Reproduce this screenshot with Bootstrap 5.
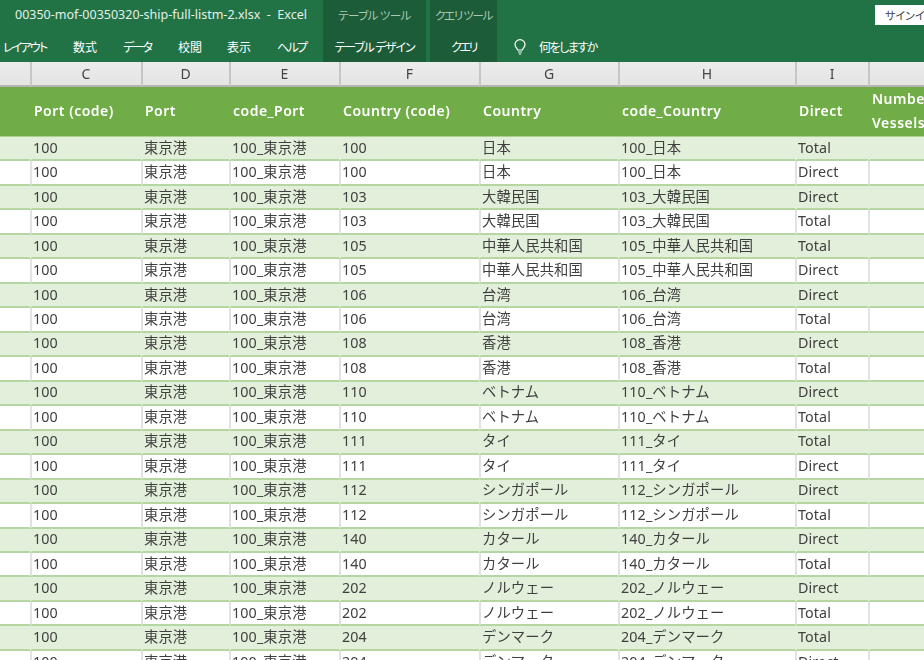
<!doctype html>
<html lang="ja"><head><meta charset="utf-8"><title>Excel</title>
<link rel="stylesheet" href="https://cdn.jsdelivr.net/npm/bootstrap@5.3.0/dist/css/bootstrap.min.css">
<style>
html,body{height:660px;overflow:hidden;background:#fff}
body{font-family:"Noto Sans","Noto Sans CJK JP",sans-serif;font-size:14px;color:#333}
.xl-window{width:924px;height:660px;overflow:hidden;filter:blur(.35px)}
.xl-ribbon{height:62px;background:#217346;color:#fff;font-family:"Noto Sans CJK JP",sans-serif;font-feature-settings:"palt"}
.xl-title{height:31px}
.xl-tabs{height:31px}
.xl-title-text{width:323px;padding-left:15px;font-size:12.5px;font-family:"Noto Sans","Noto Sans CJK JP",sans-serif;color:#e6f0ea;white-space:nowrap}
.xl-tool{height:100%;background:#1c5c38;color:#a9c9b6;font-size:11.5px;white-space:nowrap}
.xl-tool-a{width:103px;margin-right:4px;letter-spacing:-.6px}
.xl-tool-b{width:67px;letter-spacing:-1.3px}
.xl-tab{font-size:12px;white-space:nowrap}
.t1{margin-left:3px;width:70px;letter-spacing:-1.8px}.t2{width:50px}.t3{width:55px;letter-spacing:-1.7px}.t4{width:49px}.t5{width:50px}.t6{width:46px;letter-spacing:-1.7px}
.xl-tab-on{width:103px;margin-right:4px;background:#1c5c38;height:100%;letter-spacing:-1.2px}
.xl-tab-on2{width:67px;background:#1c5c38;height:100%;letter-spacing:-2.4px}
.xl-bulb{margin-left:16px;margin-right:12px}
.xl-ask{letter-spacing:-1.5px}
.xl-sign{width:49px;height:20px;margin-left:auto;margin-top:-1px;background:#fff;color:#444;font-size:11px;padding-left:10px;white-space:nowrap;overflow:hidden;line-height:20px}
.xl-grid{table-layout:fixed;width:1000px;margin:0;border-collapse:separate;border-spacing:0;--bs-table-bg:transparent;--bs-table-border-color:transparent}
.xl-grid th,.xl-grid td{white-space:nowrap;overflow:hidden;border:0;vertical-align:middle}
.xl-letters th{height:25px;background:linear-gradient(#ececec,#e4e4e4);border-left:2px solid #c6c6c6;border-bottom:2px solid #b4b4b4;text-align:center;font-weight:400;font-size:14px;color:#444;padding:0}
.xl-letters th:first-child{border-left:0}
.xl-head th{height:49px;background:#70ad47;color:#fff;font-weight:600;font-size:14px;letter-spacing:.5px;line-height:24px;padding:0 0 1px 4.5px;border-bottom:1px solid #a9d08e}
.xl-grid tbody tr{height:24.47px}
.xl-grid tbody td{font-size:14.3px;line-height:20px;letter-spacing:.12px;color:#3f3f3f;padding:0 0 1px 1.5px;border-bottom:2px solid #b5d6a0;border-left:2px solid #e2e2e2;background:#fff}
.xl-grid tbody td:first-child{border-left:0}
.xl-grid tbody tr:nth-child(odd) td{background:#e2efda;border-left-color:#e2efda}
</style></head><body>
<div class="xl-window">
<div class="xl-ribbon">
 <div class="xl-title d-flex align-items-center">
  <div class="xl-title-text">00350-mof-00350320-ship-full-listm-2.xlsx &nbsp;-&nbsp; Excel</div>
  <div class="xl-tool xl-tool-a d-flex align-items-center justify-content-center">テーブル ツール</div>
  <div class="xl-tool xl-tool-b d-flex align-items-center justify-content-center">クエリ ツール</div>
  <div class="xl-sign">サインイン</div>
 </div>
 <div class="xl-tabs d-flex align-items-center">
  <div class="xl-tab t1">レイアウト</div><div class="xl-tab t2">数式</div><div class="xl-tab t3">データ</div><div class="xl-tab t4">校閲</div><div class="xl-tab t5">表示</div><div class="xl-tab t6">ヘルプ</div>
  <div class="xl-tab xl-tab-on d-flex align-items-center justify-content-center">テーブル デザイン</div>
  <div class="xl-tab xl-tab-on2 d-flex align-items-center justify-content-center">クエリ</div>
  <svg class="xl-bulb" width="14" height="16" viewBox="0 0 14 16" fill="none" stroke="#fff" stroke-width="1.2"><path d="M4.6 11C4.4 9.4 2 8.4 2 5.6a5 5 0 0 1 10 0C12 8.4 9.6 9.4 9.4 11Z"/><path d="M5 13h4M5.8 15h2.4"/></svg>
  <div class="xl-tab xl-ask">何をしますか</div>
 </div>
</div>
<table class="table xl-grid">
<colgroup><col style="width:29.5px"><col style="width:111px"><col style="width:88px"><col style="width:110px"><col style="width:140px"><col style="width:139px"><col style="width:177px"><col style="width:73px"><col style="width:132.5px"></colgroup>
<thead>
<tr class="xl-letters"><th></th><th>C</th><th>D</th><th>E</th><th>F</th><th>G</th><th>H</th><th>I</th><th></th></tr>
<tr class="xl-head"><th></th><th>Port (code)</th><th>Port</th><th>code_Port</th><th>Country (code)</th><th>Country</th><th>code_Country</th><th>Direct</th><th>Number of<br>Vessels</th></tr>
</thead>
<tbody>
<tr><td></td><td>100</td><td>東京港</td><td>100_東京港</td><td>100</td><td>日本</td><td>100_日本</td><td>Total</td><td></td></tr>
<tr><td></td><td>100</td><td>東京港</td><td>100_東京港</td><td>100</td><td>日本</td><td>100_日本</td><td>Direct</td><td></td></tr>
<tr><td></td><td>100</td><td>東京港</td><td>100_東京港</td><td>103</td><td>大韓民国</td><td>103_大韓民国</td><td>Direct</td><td></td></tr>
<tr><td></td><td>100</td><td>東京港</td><td>100_東京港</td><td>103</td><td>大韓民国</td><td>103_大韓民国</td><td>Total</td><td></td></tr>
<tr><td></td><td>100</td><td>東京港</td><td>100_東京港</td><td>105</td><td>中華人民共和国</td><td>105_中華人民共和国</td><td>Total</td><td></td></tr>
<tr><td></td><td>100</td><td>東京港</td><td>100_東京港</td><td>105</td><td>中華人民共和国</td><td>105_中華人民共和国</td><td>Direct</td><td></td></tr>
<tr><td></td><td>100</td><td>東京港</td><td>100_東京港</td><td>106</td><td>台湾</td><td>106_台湾</td><td>Direct</td><td></td></tr>
<tr><td></td><td>100</td><td>東京港</td><td>100_東京港</td><td>106</td><td>台湾</td><td>106_台湾</td><td>Total</td><td></td></tr>
<tr><td></td><td>100</td><td>東京港</td><td>100_東京港</td><td>108</td><td>香港</td><td>108_香港</td><td>Direct</td><td></td></tr>
<tr><td></td><td>100</td><td>東京港</td><td>100_東京港</td><td>108</td><td>香港</td><td>108_香港</td><td>Total</td><td></td></tr>
<tr><td></td><td>100</td><td>東京港</td><td>100_東京港</td><td>110</td><td>ベトナム</td><td>110_ベトナム</td><td>Direct</td><td></td></tr>
<tr><td></td><td>100</td><td>東京港</td><td>100_東京港</td><td>110</td><td>ベトナム</td><td>110_ベトナム</td><td>Total</td><td></td></tr>
<tr><td></td><td>100</td><td>東京港</td><td>100_東京港</td><td>111</td><td>タイ</td><td>111_タイ</td><td>Total</td><td></td></tr>
<tr><td></td><td>100</td><td>東京港</td><td>100_東京港</td><td>111</td><td>タイ</td><td>111_タイ</td><td>Direct</td><td></td></tr>
<tr><td></td><td>100</td><td>東京港</td><td>100_東京港</td><td>112</td><td>シンガポール</td><td>112_シンガポール</td><td>Direct</td><td></td></tr>
<tr><td></td><td>100</td><td>東京港</td><td>100_東京港</td><td>112</td><td>シンガポール</td><td>112_シンガポール</td><td>Total</td><td></td></tr>
<tr><td></td><td>100</td><td>東京港</td><td>100_東京港</td><td>140</td><td>カタール</td><td>140_カタール</td><td>Direct</td><td></td></tr>
<tr><td></td><td>100</td><td>東京港</td><td>100_東京港</td><td>140</td><td>カタール</td><td>140_カタール</td><td>Total</td><td></td></tr>
<tr><td></td><td>100</td><td>東京港</td><td>100_東京港</td><td>202</td><td>ノルウェー</td><td>202_ノルウェー</td><td>Direct</td><td></td></tr>
<tr><td></td><td>100</td><td>東京港</td><td>100_東京港</td><td>202</td><td>ノルウェー</td><td>202_ノルウェー</td><td>Total</td><td></td></tr>
<tr><td></td><td>100</td><td>東京港</td><td>100_東京港</td><td>204</td><td>デンマーク</td><td>204_デンマーク</td><td>Total</td><td></td></tr>
<tr><td></td><td>100</td><td>東京港</td><td>100_東京港</td><td>204</td><td>デンマーク</td><td>204_デンマーク</td><td>Direct</td><td></td></tr>
</tbody></table>
</div>
<script src="https://cdn.jsdelivr.net/npm/bootstrap@5.3.0/dist/js/bootstrap.bundle.min.js"></script>
</body></html>
